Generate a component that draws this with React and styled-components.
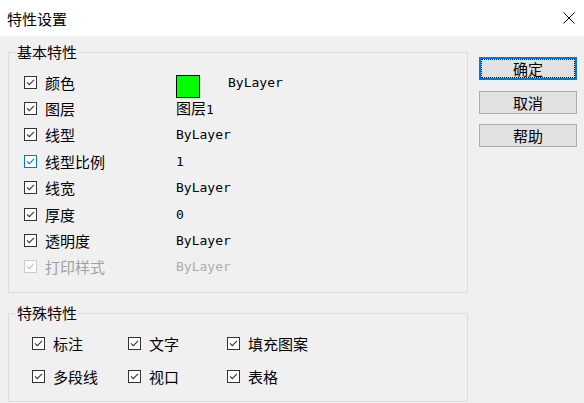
import React from "react";
import styled, { createGlobalStyle } from "styled-components";

const GlobalStyle = createGlobalStyle`
  html, body {
    margin: 0;
    padding: 0;
    background: #f0f0f0;
  }
  body {
    font-family: "Noto Sans CJK SC", "Noto Sans", sans-serif;
    font-size: 15px;
    color: #000;
  }
`;

const basicProps = [
  { label: "颜色", value: "ByLayer", swatch: "#00ff00" },
  { label: "图层", value: "1", cjk: "图层" },
  { label: "线型", value: "ByLayer" },
  { label: "线型比例", value: "1", focus: true },
  { label: "线宽", value: "ByLayer" },
  { label: "厚度", value: "0" },
  { label: "透明度", value: "ByLayer" },
  { label: "打印样式", value: "ByLayer", disabled: true },
];

const specialProps = ["标注", "文字", "填充图案", "多段线", "视口", "表格"];

const Check = ({ variant }) => {
  const colors = {
    normal: ["#333333", "#333333"],
    focus: ["#0078d7", "#0078d7"],
    disabled: ["#cccccc", "#c4c4c4"],
  }[variant || "normal"];
  return (
    <svg width="13" height="13" viewBox="0 0 13 13" style={{ flexShrink: 0 }}>
      <rect x="0.5" y="0.5" width="12" height="12" fill="#fff" stroke={colors[0]} />
      <path d="M3 6.3 L5.3 8.6 L10 3.9" fill="none" stroke={colors[1]} strokeWidth="1.1" />
    </svg>
  );
};

export default function App() {
  return (
    <>
      <GlobalStyle />
      <Window>
        <TitleBar>
          <Title>特性设置</Title>
          <svg width="12" height="12" viewBox="0 0 12 12">
            <path d="M0.5 0.5 L11.5 11.5 M11.5 0.5 L0.5 11.5" stroke="#000" strokeWidth="1" />
          </svg>
        </TitleBar>

        <Body>
          <LeftCol>
            <Group>
              <Legend>基本特性</Legend>
              <BasicList>
                {basicProps.map((p) => (
                  <BasicRow key={p.label}>
                    <Check variant={p.disabled ? "disabled" : p.focus ? "focus" : "normal"} />
                    <Label $disabled={p.disabled}>{p.label}</Label>
                    {p.swatch && <Swatch $color={p.swatch} />}
                    <Value $disabled={p.disabled} $after={!!p.swatch}>
                      {p.cjk && <Cjk>{p.cjk}</Cjk>}
                      {p.value}
                    </Value>
                  </BasicRow>
                ))}
              </BasicList>
            </Group>

            <Group>
              <Legend>特殊特性</Legend>
              <SpecialGrid>
                {specialProps.map((name) => (
                  <SpecialItem key={name}>
                    <Check />
                    <ItemText>{name}</ItemText>
                  </SpecialItem>
                ))}
              </SpecialGrid>
            </Group>
          </LeftCol>

          <Buttons>
            <Button $default>确定</Button>
            <Button>取消</Button>
            <Button>帮助</Button>
          </Buttons>
        </Body>
      </Window>
    </>
  );
}

const Window = styled.div`
  width: 584px;
  height: 403px;
  overflow: hidden;
  display: flex;
  flex-direction: column;
  background: #f0f0f0;
`;

const TitleBar = styled.div`
  height: 36px;
  flex-shrink: 0;
  box-sizing: border-box;
  background: #fff;
  display: flex;
  align-items: center;
  justify-content: space-between;
  padding: 0 9px 0 7px;
`;

const Title = styled.span`
  font-size: 15px;
  line-height: 15px;
  margin-top: 1px;
`;

const Body = styled.div`
  display: flex;
  gap: 11px;
  padding: 9px 7px 0 8px;
`;

const LeftCol = styled.div`
  width: 460px;
  display: flex;
  flex-direction: column;
  gap: 13px;
`;

const Group = styled.fieldset`
  margin: 0;
  padding: 0;
  min-width: 0;
  border: 1px solid #dcdcdc;
`;

const Legend = styled.legend`
  margin-left: 7px;
  padding: 0 1px;
  font-size: 15px;
  line-height: 14px;
`;

const BasicList = styled.div`
  display: flex;
  flex-direction: column;
  padding: 10px 0 12px 15px;
`;

const BasicRow = styled.div`
  display: flex;
  align-items: center;
  height: 26.4px;
`;

const Label = styled.span`
  width: 131px;
  margin-left: 8px;
  line-height: 15px;
  color: ${(p) => (p.$disabled ? "#a0a0a0" : "#000")};
`;

const Swatch = styled.span`
  width: 24px;
  height: 23px;
  margin-top: 9px;
  box-sizing: border-box;
  border: 1px solid #000;
  background: ${(p) => p.$color};
`;

const Value = styled.span`
  font-family: "DejaVu Sans Mono", "Liberation Mono", monospace;
  font-size: 13px;
  line-height: 15px;
  margin-left: ${(p) => (p.$after ? "28px" : "0")};
  color: ${(p) => (p.$disabled ? "#adadad" : "#000")};
`;

const Cjk = styled.span`
  font-family: "Noto Sans CJK SC", sans-serif;
  font-size: 15px;
`;

const SpecialGrid = styled.div`
  display: grid;
  grid-template-columns: 96px 99px 1fr;
  grid-auto-rows: 33px;
  padding: 7px 0 8px 23px;
`;

const SpecialItem = styled.div`
  display: flex;
  align-items: center;
`;

const ItemText = styled.span`
  margin-left: 8px;
  line-height: 15px;
`;

const Buttons = styled.div`
  display: flex;
  flex-direction: column;
  gap: 10.5px;
  padding-top: 12px;
`;

const Button = styled.button`
  width: 98px;
  height: 23px;
  box-sizing: border-box;
  padding: 0;
  background: #e1e1e1;
  border: ${(p) => (p.$default ? "2px solid #0078d7" : "1px solid #adadad")};
  outline: ${(p) => (p.$default ? "1px dotted #000" : "none")};
  outline-offset: -3px;
  font-family: "Noto Sans CJK SC", sans-serif;
  font-size: 15px;
  line-height: 15px;
  color: #000;
`;
